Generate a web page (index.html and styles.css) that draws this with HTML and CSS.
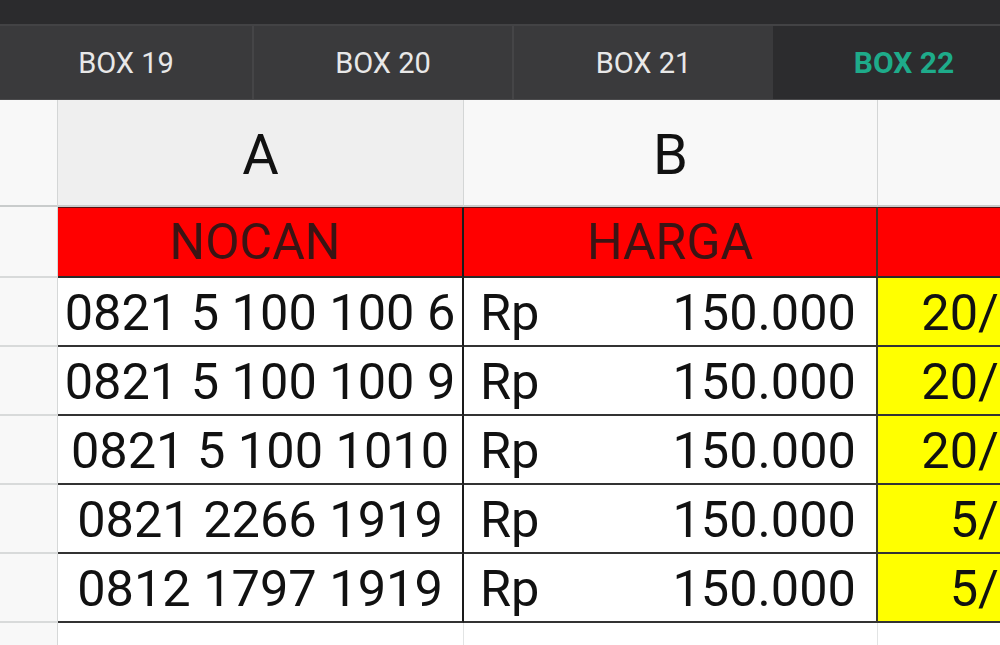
FILE: index.html
```
<!DOCTYPE html>
<html>
<head>
<meta charset="utf-8">
<link rel="stylesheet" href="styles.css">
</head>
<body>
<div class="topbar"></div>
<nav class="tabs">
  <div class="tab t1">BOX 19</div>
  <div class="tab t2 sep">BOX 20</div>
  <div class="tab t3 sep">BOX 21</div>
  <div class="tab t4 active">BOX 22</div>
</nav>
<div class="sheet">
<table class="grid">
  <colgroup>
    <col class="c-rh">
    <col class="c-a">
    <col class="c-b">
    <col class="c-c">
  </colgroup>
  <thead>
    <tr class="colhead">
      <th class="rh"></th>
      <th class="ha">A</th>
      <th class="hb">B</th>
      <th class="hc"></th>
    </tr>
  </thead>
  <tbody>
    <tr class="title">
      <td class="rh"></td>
      <td class="red a">NOCAN</td>
      <td class="red b">HARGA</td>
      <td class="red c"></td>
    </tr>
    <tr class="data">
      <td class="rh"></td>
      <td class="a">0821 5 100 100 6</td>
      <td class="b"><div class="money"><span>Rp</span><span>150.000</span></div></td>
      <td class="c yellow">20/06/2019</td>
    </tr>
    <tr class="data">
      <td class="rh"></td>
      <td class="a">0821 5 100 100 9</td>
      <td class="b"><div class="money"><span>Rp</span><span>150.000</span></div></td>
      <td class="c yellow">20/06/2019</td>
    </tr>
    <tr class="data">
      <td class="rh"></td>
      <td class="a">0821 5 100 1010</td>
      <td class="b"><div class="money"><span>Rp</span><span>150.000</span></div></td>
      <td class="c yellow">20/06/2019</td>
    </tr>
    <tr class="data">
      <td class="rh"></td>
      <td class="a">0821 2266 1919</td>
      <td class="b"><div class="money"><span>Rp</span><span>150.000</span></div></td>
      <td class="c yellow">5/06/2019</td>
    </tr>
    <tr class="data">
      <td class="rh"></td>
      <td class="a">0812 1797 1919</td>
      <td class="b"><div class="money"><span>Rp</span><span>150.000</span></div></td>
      <td class="c yellow">5/06/2019</td>
    </tr>
    <tr class="blank">
      <td class="rh"></td>
      <td class="e"></td>
      <td class="e"></td>
      <td class="e"></td>
    </tr>
  </tbody>
</table>
</div>
</body>
</html>
```

FILE: styles.css
```
html, body {
  margin: 0;
  padding: 0;
  background: #ffffff;
  font-family: Roboto, "Liberation Sans", Arial, sans-serif;
  overflow: hidden;
  width: 1000px;
  height: 645px;
}

.topbar {
  height: 24px;
  background: #2b2b2d;
}

.tabs {
  display: flex;
  height: 73px;
  background: #3a3a3c;
  border-top: 2px solid #434345;
  border-bottom: 1px solid #4a4a4c;
  overflow: hidden;
}

.tab {
  flex: none;
  display: flex;
  align-items: center;
  justify-content: center;
  font-size: 29px;
  font-weight: 400;
  color: #e8e8e8;
  box-sizing: border-box;
}

.tab.sep {
  border-left: 2px solid #454547;
}

.t1 { width: 252px; }
.t2 { width: 260px; }
.t3 { width: 261px; }
.t4 { width: 260px; }

.tab.active {
  background: #2c2c2e;
  color: #1eab8a;
  font-size: 30px;
  font-weight: 700;
  padding-left: 2px;
}

.sheet {
  width: 1000px;
  overflow: hidden;
}

.grid {
  border-collapse: separate;
  border-spacing: 0;
  table-layout: fixed;
  width: 1218px;
}

.c-rh { width: 58px; }
.c-a { width: 406px; }
.c-b { width: 414px; }
.c-c { width: 340px; }

.grid th, .grid td {
  padding: 0;
  box-sizing: border-box;
  white-space: nowrap;
  overflow: hidden;
}

.colhead th {
  height: 107px;
  font-size: 56px;
  font-weight: 400;
  color: #111;
  background: #f8f8f8;
  border-bottom: 2px solid #c9cccc;
  border-right: 1px solid #d4d6d6;
  padding-top: 4px;
}

.colhead .ha {
  background: #efefef;
}

.rh {
  background: #f8f8f8;
  border-right: 1px solid #d6d8d8;
  border-bottom: 2px solid #d8dada;
}

.title td {
  height: 71px;
}

.title .rh {
  border-bottom: 2px solid #d8dada;
}

.red {
  background: #ff0000;
  color: #3a1414;
  font-size: 50px;
  text-align: center;
  border-top: 1px solid #5a1010;
  border-bottom: 2px solid #2a2a2a;
  border-right: 2px solid #1a1a1a;
  vertical-align: middle;
}

.red.a {
  padding-right: 10px;
}

.data td {
  height: 69px;
  vertical-align: middle;
}

.data .a,
.data .b,
.data .c {
  font-size: 50.5px;
  color: #111;
  border-bottom: 2px solid #333;
  border-right: 2px solid #1a1a1a;
}

.data .a {
  text-align: center;
  padding-top: 2px;
}

.money {
  display: flex;
  justify-content: space-between;
  padding: 2px 20px 0 16px;
}

.data .yellow {
  background: #ffff00;
  text-align: right;
  padding-right: 28px;
  padding-top: 2px;
}

.data .c {
  border-right: none;
}

.grid .b {
  border-right-color: #3a3a2a;
}

.blank td {
  height: 30px;
}

.blank .e {
  background: #ffffff;
  border-right: 1px solid #e2e4e4;
}
```
